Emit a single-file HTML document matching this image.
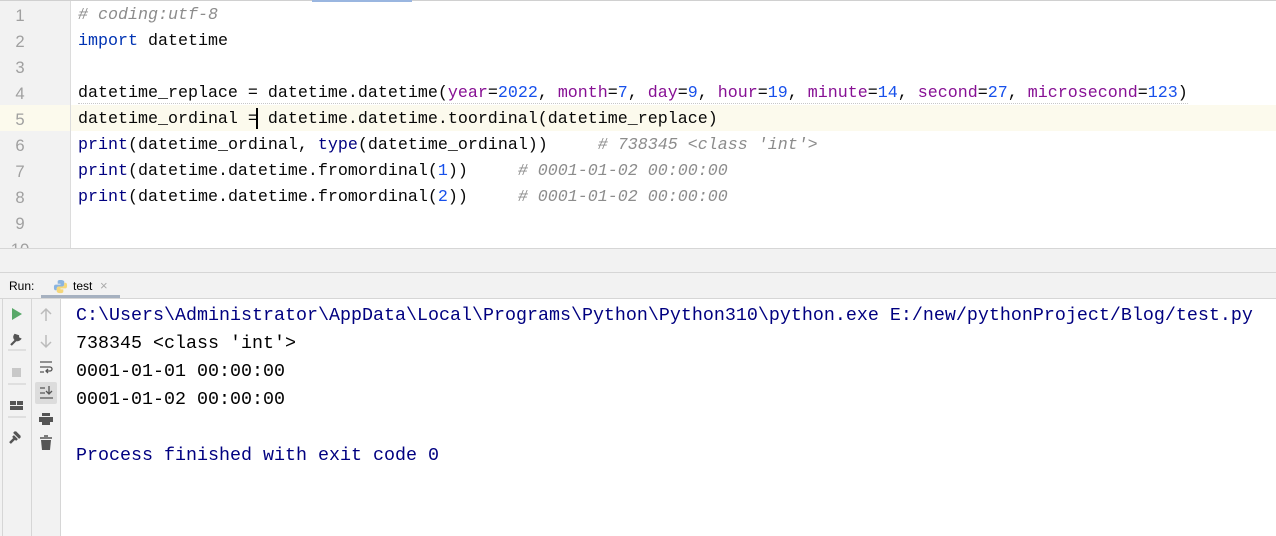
<!DOCTYPE html>
<html><head><style>
body{margin:0;width:1276px;height:536px;overflow:hidden;background:#fff;position:relative;font-family:"Liberation Mono",monospace}
.a{position:absolute}
.ln{position:absolute;left:0;width:40px;text-align:center;color:#a0a0a0;font-size:16.67px;font-family:"Liberation Sans",sans-serif}
.c{position:absolute;left:78px;white-space:pre;font-size:16.67px;color:#080808}
.k{color:#0033b3}.p{color:#871094}.n{color:#1750eb}.b{color:#000080}.cm{color:#8c8c8c;font-style:italic}
.o{position:absolute;left:76px;white-space:pre;font-size:18.33px;color:#000}
</style></head><body>
<div class="a" style="left:0;top:0;width:1276px;height:1px;background:#d0d0d0"></div>
<div class="a" style="left:312px;top:0;width:100px;height:2px;background:#9ab6e0"></div>
<div class="a" style="left:0;top:1px;width:70px;height:247px;background:#f2f2f2"></div>
<div class="a" style="left:70px;top:1px;width:1px;height:247px;background:#dcdcdc"></div>
<div class="a" style="left:0;top:105px;width:70px;height:26px;background:#fcfaed"></div>
<div class="a" style="left:71px;top:105px;width:1205px;height:26px;background:#fcfaed"></div>
<div class="ln" style="top:6px">1</div>
<div class="ln" style="top:32px">2</div>
<div class="ln" style="top:58px">3</div>
<div class="ln" style="top:84px">4</div>
<div class="ln" style="top:110px">5</div>
<div class="ln" style="top:136px">6</div>
<div class="ln" style="top:162px">7</div>
<div class="ln" style="top:188px">8</div>
<div class="ln" style="top:214px">9</div>
<div class="ln" style="top:240px">10</div>
<div class="c cm" style="top:6px"># coding:utf-8</div>
<div class="c" style="top:32px"><span class="k">import</span> datetime</div>
<div class="c" style="top:84px;border-bottom:1px dotted #c8c8c8">datetime_replace = datetime.datetime(<span class="p">year</span>=<span class="n">2022</span>, <span class="p">month</span>=<span class="n">7</span>, <span class="p">day</span>=<span class="n">9</span>, <span class="p">hour</span>=<span class="n">19</span>, <span class="p">minute</span>=<span class="n">14</span>, <span class="p">second</span>=<span class="n">27</span>, <span class="p">microsecond</span>=<span class="n">123</span>)</div>
<div class="c" style="top:110px">datetime_ordinal = datetime.datetime.toordinal(datetime_replace)</div>
<div class="a" style="left:256px;top:108px;width:2px;height:21px;background:#000"></div>
<div class="c" style="top:136px"><span class="b">print</span>(datetime_ordinal, <span class="b">type</span>(datetime_ordinal))     <span class="cm"># 738345 &lt;class 'int'&gt;</span></div>
<div class="c" style="top:162px"><span class="b">print</span>(datetime.datetime.fromordinal(<span class="n">1</span>))     <span class="cm"># 0001-01-02 00:00:00</span></div>
<div class="c" style="top:188px"><span class="b">print</span>(datetime.datetime.fromordinal(<span class="n">2</span>))     <span class="cm"># 0001-01-02 00:00:00</span></div>
<div class="a" style="left:0;top:248px;width:1276px;height:50px;background:#f2f2f2;border-top:1px solid #d6d6d6"></div>
<div class="a" style="left:0;top:272px;width:1276px;height:1px;background:#d6d6d6"></div>
<div class="a" style="left:9px;top:279px;font-family:'Liberation Sans',sans-serif;font-size:12px;color:#000">Run:</div>
<svg class="a" style="left:53px;top:279px" width="15" height="15" viewBox="0 0 16 16"><path d="M8 1c-3 0-3 1-3 2v2h3v1H3c-2 0-2 2-2 3s0 3 2 3h1v-2c0-1 1-2 2-2h4c1 0 2-1 2-2V3c0-1-1-2-4-2z" fill="#8ab4e0"/><path d="M8 15c3 0 3-1 3-2v-2H8v-1h5c2 0 2-2 2-3s0-3-2-3h-1v2c0 1-1 2-2 2H6c-1 0-2 1-2 2v3c0 1 1 2 4 2z" fill="#f5d77a"/></svg>
<div class="a" style="left:73px;top:279px;font-family:'Liberation Sans',sans-serif;font-size:12px;color:#000">test</div>
<div class="a" style="left:100px;top:278px;font-family:'Liberation Sans',sans-serif;font-size:13px;color:#aaa">×</div>
<div class="a" style="left:41px;top:295px;width:79px;height:3px;background:#a6b1c0"></div>
<div class="a" style="left:0;top:298px;width:1276px;height:1px;background:#d6d6d6"></div>
<div class="a" style="left:0;top:299px;width:61px;height:237px;background:#f2f2f2"></div>
<div class="a" style="left:2px;top:299px;width:1px;height:237px;background:#d6d6d6"></div>
<div class="a" style="left:31px;top:299px;width:1px;height:237px;background:#d6d6d6"></div>
<div class="a" style="left:60px;top:299px;width:1px;height:237px;background:#d6d6d6"></div>
<svg class="a" style="left:0;top:299px" width="61" height="160">
<path d="M12 9l10 6-10 6z" fill="#59a869"/>
<path d="M11 46l6-6M15 36a3 3 0 1 0 5 4l-2-1 0-2z" stroke="#555" stroke-width="2.2" fill="#555"/>
<line x1="8" y1="51" x2="26" y2="51" stroke="#ccc"/>
<rect x="12" y="69" width="9" height="9" fill="#c8c8c8"/>
<line x1="8" y1="85" x2="26" y2="85" stroke="#ccc"/>
<rect x="10" y="102" width="6" height="4" fill="#555"/><rect x="17" y="102" width="6" height="4" fill="#555"/><rect x="10" y="107" width="13" height="4" fill="#555"/>
<line x1="8" y1="118" x2="26" y2="118" stroke="#ccc"/>
<path d="M10 144l5-5M14 133l6 6M13 137l4 4M15 133l5 5" stroke="#555" stroke-width="2.5"/>
<path d="M46 10v12M41 15l5-5 5 5" stroke="#bbb" stroke-width="1.5" fill="none"/>
<path d="M46 36v12M41 43l5 5 5-5" stroke="#bbb" stroke-width="1.5" fill="none"/>
<path d="M40 63h12M40 68h10a2 2 0 0 1 0 4h-4M48 70l-2 2 2 2M40 73h4" stroke="#555" stroke-width="1.3" fill="none"/>
<rect x="35" y="83" width="22" height="22" rx="2" fill="#dcdcdc"/>
<path d="M40 89h5M40 94h5M49 87v8M46 92l3 3 3-3M40 99h13" stroke="#555" stroke-width="1.3" fill="none"/>
<path d="M42 114h8v3h-8zM39 118h14v5h-14zM42 122h8v4h-8z" fill="#555"/>
<path d="M40 139h12M44 137h4" stroke="#555" stroke-width="1.5"/><path d="M41 141h10l-1 10h-8z" fill="#555"/>
</svg>
<div class="o" style="top:305px;color:#000080">C:\Users\Administrator\AppData\Local\Programs\Python\Python310\python.exe E:/new/pythonProject/Blog/test.py</div>
<div class="o" style="top:333px">738345 &lt;class 'int'&gt;</div>
<div class="o" style="top:361px">0001-01-01 00:00:00</div>
<div class="o" style="top:389px">0001-01-02 00:00:00</div>
<div class="o" style="top:445px;color:#000080">Process finished with exit code 0</div>
</body></html>
